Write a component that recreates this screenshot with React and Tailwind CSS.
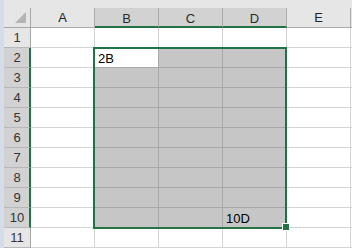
import React from "react";

const COLS = ["A", "B", "C", "D", "E"];
const ROWS = [1, 2, 3, 4, 5, 6, 7, 8, 9, 10, 11];

// selection B2:D10
const inSel = (r, c) => r >= 2 && r <= 10 && c >= 1 && c <= 3;

const values = { "2-1": "2B", "10-3": "10D" };

function Cell({ r, c }) {
  const sel = inSel(r, c);
  const active = r === 2 && c === 1;
  const text = values[`${r}-${c}`];
  let cls = "w-[64px] h-full border-r border-b flex items-end pl-[3px] pb-[2px] text-[13px] leading-none text-black ";
  if (sel && !active) cls += "bg-[#c6c6c6] border-[#a8a8a8]";
  else if (active) cls += "bg-white border-[#a8a8a8]";
  else cls += "bg-white border-[#d4d4d4]";
  return <div className={cls}>{text}</div>;
}

export default function App() {
  return (
    <div
      className="relative w-[352px] h-[248px] overflow-hidden bg-white flex"
      style={{ fontFamily: '"Liberation Sans", Arial, sans-serif' }}
    >
      {/* left window edge */}
      <div className="w-[4px] h-full bg-[#d5dde8]" />

      <div className="flex-1 flex flex-col">
        {/* strip above headers */}
        <div className="h-[8px] bg-[#e6e6e6]" />

        {/* column headers */}
        <div className="h-[20px] flex bg-[#e6e6e6]">
          <div className="w-[27px] h-full border-r border-b border-[#a6a6a6] relative">
            <div className="absolute right-[4px] bottom-[4px] w-0 h-0 border-l-[11px] border-l-transparent border-b-[11px] border-b-[#b4b4b4]" />
          </div>
          {COLS.map((c, i) => {
            const hi = i >= 1 && i <= 3;
            return (
              <div
                key={c}
                className={
                  "w-[64px] h-full border-r flex items-center justify-center text-[13px] leading-none " +
                  (hi
                    ? "bg-[#d2d2d2] border-[#ababab] border-b-2 border-b-[#217346] text-[#2a2a2a] pt-[2px]"
                    : "border-[#ababab] border-b text-[#222]")
                }
              >
                {c}
              </div>
            );
          })}
          <div className="flex-1 border-b border-[#a6a6a6]" />
        </div>

        {/* rows */}
        {ROWS.map((r) => {
          const hi = r >= 2 && r <= 10;
          return (
            <div key={r} className="h-[20px] flex">
              <div
                className={
                  "w-[27px] h-full border-b flex items-center justify-center text-[13px] leading-none text-[#333] " +
                  (hi
                    ? "bg-[#d2d2d2] border-[#b8b8b8] border-r-2 border-r-[#217346] pl-[1px]"
                    : "bg-[#e6e6e6] border-[#b8b8b8] border-r border-r-[#a6a6a6]")
                }
              >
                {r}
              </div>
              {COLS.map((c, i) => (
                <Cell key={c} r={r} c={i} />
              ))}
              <div className="flex-1 border-b border-[#d4d4d4]" />
            </div>
          );
        })}
      </div>

      {/* selection outline */}
      <div className="absolute left-[93px] top-[47px] w-[194px] h-[182px] border-2 border-[#217346] pointer-events-none" />
      {/* fill handle */}
      <div className="absolute left-[282px] top-[223px] w-[8px] h-[8px] bg-[#217346] border border-white" />
    </div>
  );
}
